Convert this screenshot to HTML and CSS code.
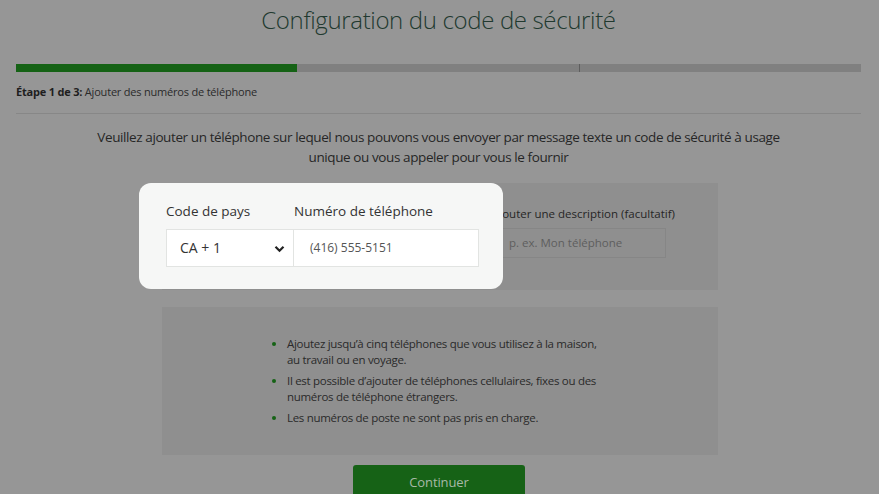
FILE: index.html
```html
<!DOCTYPE html>
<html lang="fr">
<head>
<meta charset="utf-8">
<title>Configuration du code de sécurité</title>
<link rel="stylesheet" href="styles.css">
</head>
<body>
<div class="page">
  <h1 class="title">Configuration du code de sécurité</h1>
  <div class="progress">
    <div class="progress-fill"></div>
    <div class="progress-rest"><span class="progress-mark"></span></div>
  </div>
  <p class="step"><strong>Étape 1 de 3:</strong> Ajouter des numéros de téléphone</p>
  <hr class="rule">
  <p class="intro">Veuillez ajouter un téléphone sur lequel nous pouvons vous envoyer par message texte un code de sécurité à usage<br>unique ou vous appeler pour vous le fournir</p>
  <div class="panel panel-form">
    <div class="field-desc">
      <label class="desc-label">Ajouter une description (facultatif)</label>
      <div class="desc-input">p. ex. Mon téléphone</div>
    </div>
    <div class="spotlight">
      <div class="spot-field">
        <div class="spot-label">Code de pays</div>
        <div class="spot-select">CA + 1
          <svg class="chev" width="11" height="8" viewBox="0 0 11 8"><path d="M1.5 1.8 L5.5 5.8 L9.5 1.8" fill="none" stroke="#222" stroke-width="2.2"/></svg>
        </div>
      </div>
      <div class="spot-field">
        <div class="spot-label">Numéro de téléphone</div>
        <div class="spot-input">(416) 555-5151</div>
      </div>
    </div>
  </div>
  <div class="panel panel-info">
    <ul class="tips">
      <li>Ajoutez jusqu’à cinq téléphones que vous utilisez à la maison, au travail ou en voyage.</li>
      <li>Il est possible d’ajouter de téléphones cellulaires, fixes ou des numéros de téléphone étrangers.</li>
      <li>Les numéros de poste ne sont pas pris en charge.</li>
    </ul>
  </div>
  <div class="actions">
    <button class="btn">Continuer</button>
  </div>
</div>
</body>
</html>
```
FILE: styles.css
```css
html, body {
  margin: 0;
  padding: 0;
  background: #969696;
  height: 100%;
  overflow: hidden;
}
body {
  font-family: "Open Sans", "Noto Sans", sans-serif;
  color: #2a2a2a;
}
.page {
  width: 845px;
  margin-left: 16px;
}
.title {
  margin: 0;
  font-size: 24px;
  font-weight: 300;
  line-height: 40px;
  text-align: center;
  color: #21392f;
  letter-spacing: -0.35px;
}
.progress {
  display: flex;
  height: 8px;
  margin-top: 24px;
}
.progress-fill {
  width: 281px;
  background: #156215;
}
.progress-rest {
  flex: 1;
  background: #808080;
  position: relative;
}
.progress-mark {
  position: absolute;
  left: 282px;
  top: 0;
  width: 1px;
  height: 8px;
  background: #5e5e5e;
}
.step {
  margin: 12px 0 0;
  font-size: 11px;
  line-height: 16px;
  color: #2a2a2a;
  letter-spacing: -0.2px;
}
.step strong {
  font-weight: 700;
  color: #1e1e1e;
}
.rule {
  margin: 13px 0 0;
  border: 0;
  height: 1px;
  background: #878787;
}
.intro {
  margin: 13px 0 0;
  font-size: 13.5px;
  line-height: 20px;
  text-align: center;
  color: #262626;
  letter-spacing: -0.4px;
}
.panel {
  background: #8f8f8f;
  width: 556px;
  margin-left: 146px;
}
.panel-form {
  margin-top: 16px;
  height: 107px;
  position: relative;
  display: flex;
  justify-content: flex-end;
  box-sizing: border-box;
  padding: 23px 52px 0 0;
}
.field-desc {
  width: 172px;
  display: flex;
  flex-direction: column;
  gap: 6px;
}
.desc-label {
  font-size: 11.5px;
  line-height: 16px;
  white-space: nowrap;
  color: #262626;
  margin-left: -2px;
}
.desc-input {
  height: 30px;
  box-sizing: border-box;
  border: 1px solid #868686;
  padding: 0 14px;
  font-size: 11.5px;
  line-height: 28px;
  color: #5e5e5e;
}
.spotlight {
  position: absolute;
  left: -23px;
  top: 0;
  width: 364px;
  height: 106px;
  box-sizing: border-box;
  background: #f6f7f6;
  border-radius: 12px;
  display: flex;
  padding: 19px 0 0 27px;
  z-index: 2;
}
.spot-field {
  display: flex;
  flex-direction: column;
  gap: 9px;
}
.spot-label {
  font-size: 13.5px;
  line-height: 18px;
  color: #333;
}
.spot-select {
  width: 128px;
  height: 38px;
  box-sizing: border-box;
  border: 1px solid #e2e4e2;
  background: #fff;
  padding: 0 0 0 13px;
  font-size: 14px;
  line-height: 36px;
  color: #333;
  position: relative;
}
.chev {
  position: absolute;
  right: 8px;
  top: 15px;
}
.spot-input {
  width: 185px;
  height: 38px;
  box-sizing: border-box;
  border: 1px solid #e2e4e2;
  border-left: 0;
  background: #fff;
  padding: 0 0 0 16px;
  font-size: 12px;
  line-height: 36px;
  color: #555;
}
.panel-info {
  margin-top: 17px;
  height: 148px;
  box-sizing: border-box;
  padding: 29px 0 0 110px;
}
.tips {
  list-style: none;
  margin: 0;
  padding: 0;
  width: 328px;
}
.tips li {
  position: relative;
  padding-left: 15px;
  font-size: 11.5px;
  line-height: 16px;
  color: #2a2a2a;
  margin-bottom: 5px;
  letter-spacing: -0.3px;
}
.tips li::before {
  content: "";
  position: absolute;
  left: 0;
  top: 6px;
  width: 4px;
  height: 4px;
  border-radius: 50%;
  background: #156215;
}
.actions {
  display: flex;
  justify-content: center;
  margin-top: 10px;
}
.btn {
  width: 172px;
  height: 34px;
  margin-left: 1px;
  border: 0;
  border-radius: 3px;
  background: #166216;
  color: #a7b9a7;
  font-family: "Open Sans", "Noto Sans", sans-serif;
  font-size: 13px;
  line-height: 30px;
  padding: 0;
  letter-spacing: -0.1px;
}
```
